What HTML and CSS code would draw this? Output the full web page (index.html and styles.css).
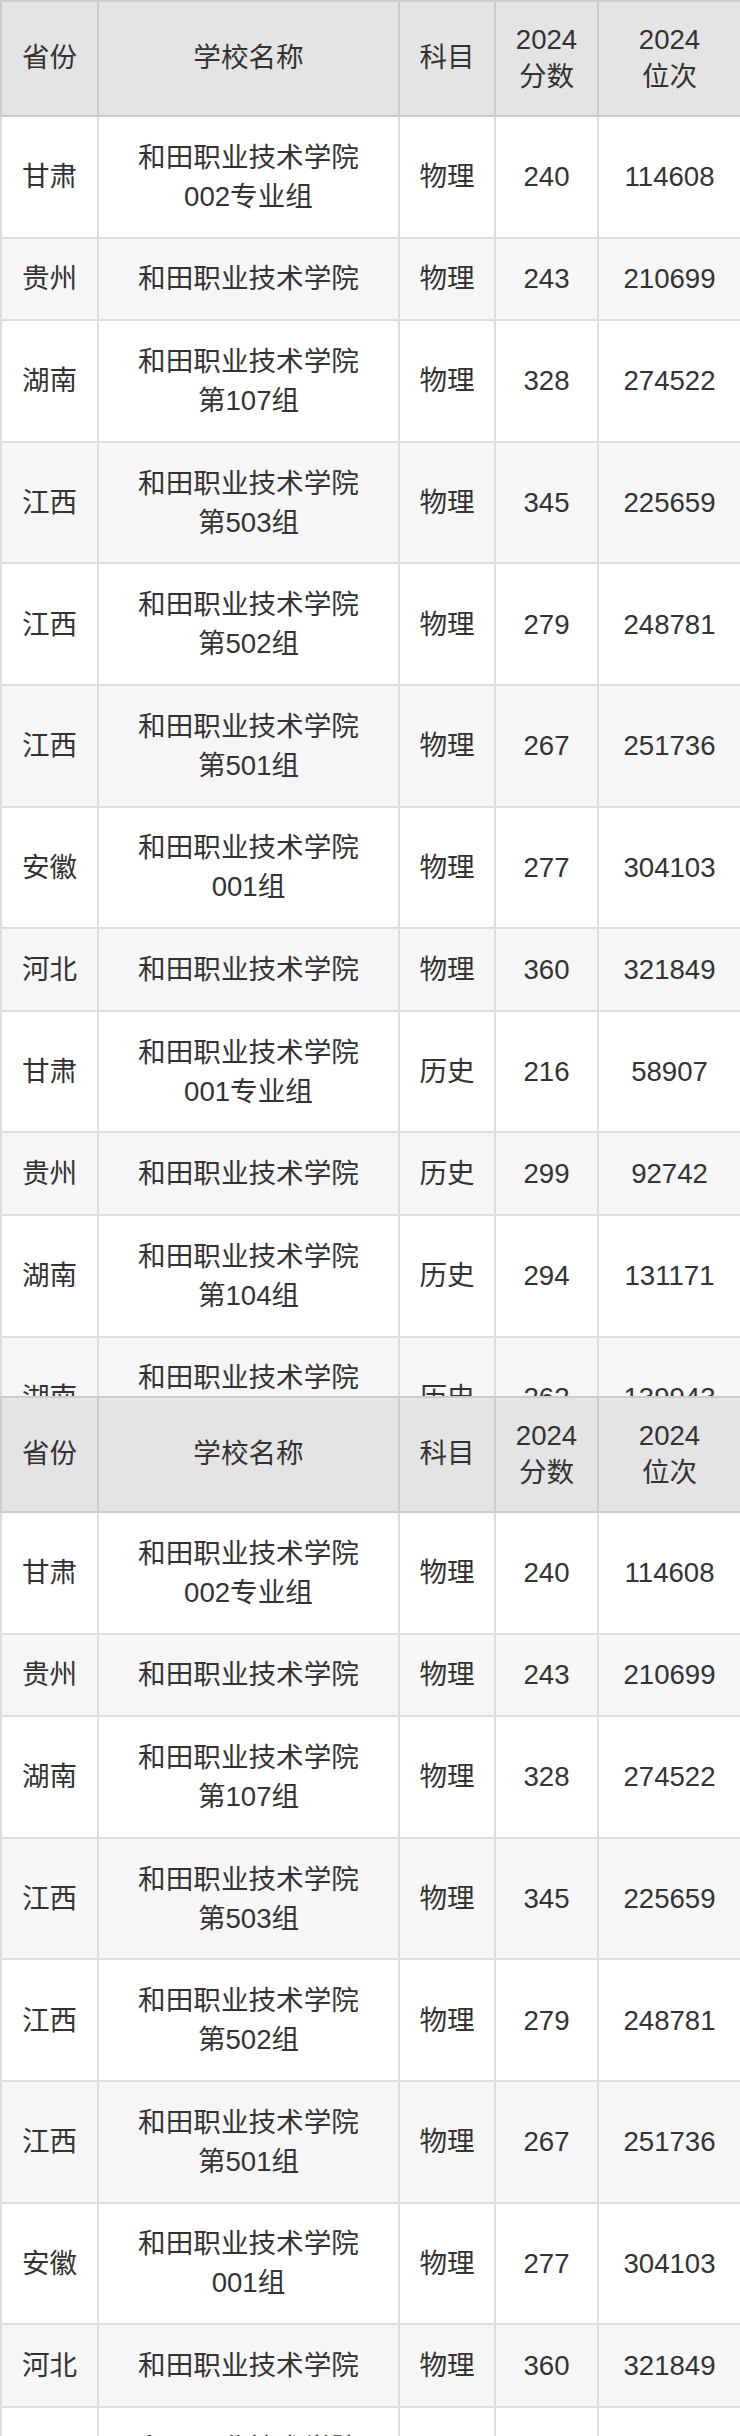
FILE: index.html
```html
<!DOCTYPE html>
<html lang="zh-CN">
<head>
<meta charset="utf-8">
<link rel="stylesheet" href="styles.css">
</head>
<body>
<div class="page">
  <div class="frame frame-top">
    <table class="score-table">
      <colgroup><col class="c1"><col class="c2"><col class="c3"><col class="c4"><col class="c5"></colgroup>
      <thead>
        <tr><th>省份</th><th>学校名称</th><th>科目</th><th>2024<br>分数</th><th>2024<br>位次</th></tr>
      </thead>
      <tbody>
        <tr><td>甘肃</td><td>和田职业技术学院<br>002专业组</td><td>物理</td><td>240</td><td>114608</td></tr>
        <tr class="alt"><td>贵州</td><td>和田职业技术学院</td><td>物理</td><td>243</td><td>210699</td></tr>
        <tr><td>湖南</td><td>和田职业技术学院<br>第107组</td><td>物理</td><td>328</td><td>274522</td></tr>
        <tr class="alt"><td>江西</td><td>和田职业技术学院<br>第503组</td><td>物理</td><td>345</td><td>225659</td></tr>
        <tr><td>江西</td><td>和田职业技术学院<br>第502组</td><td>物理</td><td>279</td><td>248781</td></tr>
        <tr class="alt"><td>江西</td><td>和田职业技术学院<br>第501组</td><td>物理</td><td>267</td><td>251736</td></tr>
        <tr><td>安徽</td><td>和田职业技术学院<br>001组</td><td>物理</td><td>277</td><td>304103</td></tr>
        <tr class="alt"><td>河北</td><td>和田职业技术学院</td><td>物理</td><td>360</td><td>321849</td></tr>
        <tr><td>甘肃</td><td>和田职业技术学院<br>001专业组</td><td>历史</td><td>216</td><td>58907</td></tr>
        <tr class="alt"><td>贵州</td><td>和田职业技术学院</td><td>历史</td><td>299</td><td>92742</td></tr>
        <tr><td>湖南</td><td>和田职业技术学院<br>第104组</td><td>历史</td><td>294</td><td>131171</td></tr>
        <tr class="alt"><td>湖南</td><td>和田职业技术学院<br>第105组</td><td>历史</td><td>262</td><td>139943</td></tr>
      </tbody>
    </table>
  </div>
  <div class="frame frame-bottom">
    <table class="score-table">
      <colgroup><col class="c1"><col class="c2"><col class="c3"><col class="c4"><col class="c5"></colgroup>
      <thead>
        <tr><th>省份</th><th>学校名称</th><th>科目</th><th>2024<br>分数</th><th>2024<br>位次</th></tr>
      </thead>
      <tbody>
        <tr><td>甘肃</td><td>和田职业技术学院<br>002专业组</td><td>物理</td><td>240</td><td>114608</td></tr>
        <tr class="alt"><td>贵州</td><td>和田职业技术学院</td><td>物理</td><td>243</td><td>210699</td></tr>
        <tr><td>湖南</td><td>和田职业技术学院<br>第107组</td><td>物理</td><td>328</td><td>274522</td></tr>
        <tr class="alt"><td>江西</td><td>和田职业技术学院<br>第503组</td><td>物理</td><td>345</td><td>225659</td></tr>
        <tr><td>江西</td><td>和田职业技术学院<br>第502组</td><td>物理</td><td>279</td><td>248781</td></tr>
        <tr class="alt"><td>江西</td><td>和田职业技术学院<br>第501组</td><td>物理</td><td>267</td><td>251736</td></tr>
        <tr><td>安徽</td><td>和田职业技术学院<br>001组</td><td>物理</td><td>277</td><td>304103</td></tr>
        <tr class="alt"><td>河北</td><td>和田职业技术学院</td><td>物理</td><td>360</td><td>321849</td></tr>
        <tr><td>甘肃</td><td>和田职业技术学院<br>001专业组</td><td>历史</td><td>216</td><td>58907</td></tr>
      </tbody>
    </table>
  </div>
</div>
</body>
</html>
```

FILE: styles.css
```css
html, body {
  margin: 0;
  padding: 0;
  background: #ffffff;
}
body {
  width: 740px;
  height: 2436px;
  overflow: hidden;
  font-family: "Liberation Sans", "Noto Sans CJK SC", sans-serif;
  color: #333333;
}
.page {
  display: flex;
  flex-direction: column;
}
.frame {
  overflow: hidden;
}
.frame-top {
  height: 1396px;
  flex: none;
}
.frame-bottom {
  flex: 1;
}
.score-table {
  width: 740px;
  table-layout: fixed;
  border-collapse: collapse;
  font-size: 27.6px;
}
.c1 { width: 97px; }
.c2 { width: 301px; }
.c3 { width: 96px; }
.c4 { width: 103px; }
.c5 { width: 143px; }
.score-table th,
.score-table td {
  text-align: center;
  vertical-align: middle;
  border: 2px solid #dddddd;
  padding: 20.8px 4px;
  line-height: 39px;
  font-weight: normal;
}
.score-table th {
  background: #e4e4e4;
  border-color: #cccccc;
  padding: 20px 4px;
  line-height: 36.5px;
}
.score-table tr.alt td {
  background: #f6f6f6;
}
```
